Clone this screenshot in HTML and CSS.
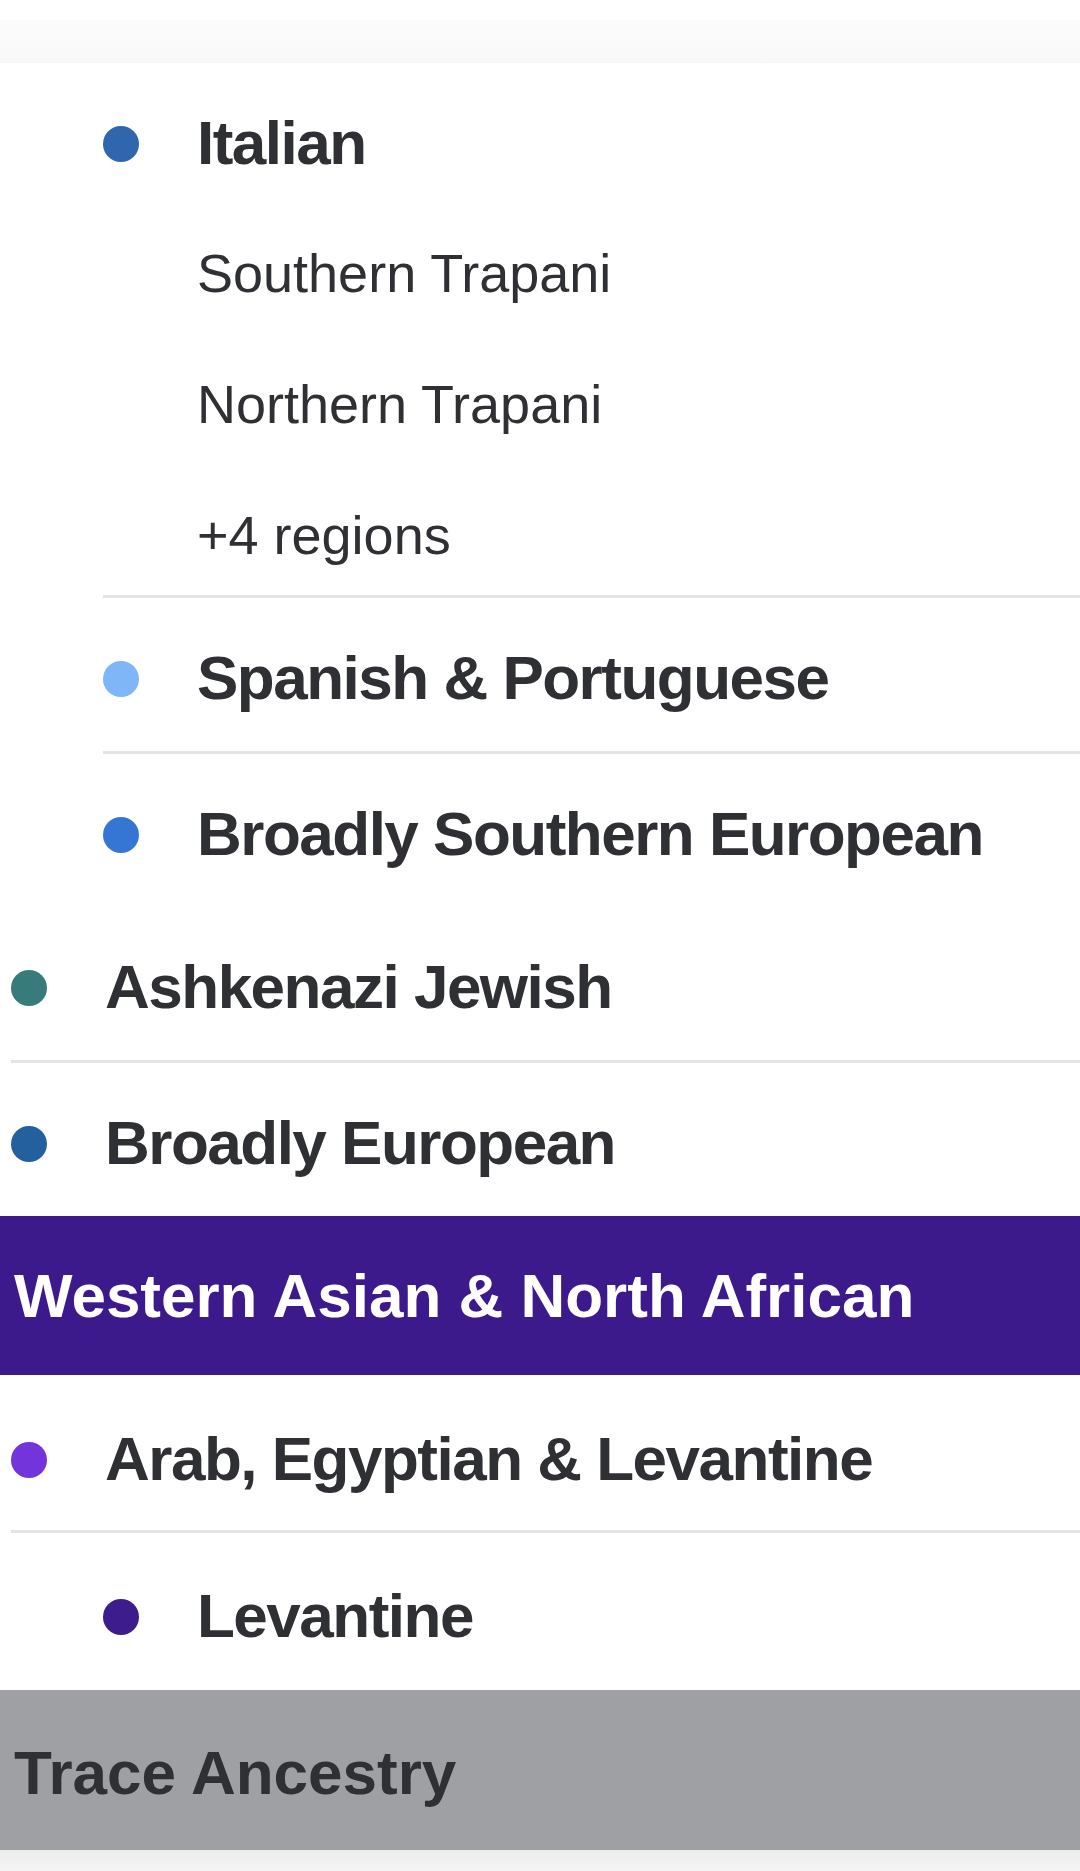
FILE: index.html
```html
<!DOCTYPE html>
<html lang="en">
<head>
  <meta charset="UTF-8">
  <title>Ancestry Composition</title>
  <link rel="stylesheet" href="styles.css">
</head>
<body>

<div class="topbar"></div>

<div class="card">
  <div class="group nested">
    <div class="row">
      <span class="dot italian"></span>
      <span class="label">Italian</span>
    </div>
    <div class="subs">
      <div class="sub">Southern Trapani</div>
      <div class="sub">Northern Trapani</div>
      <div class="sub">+4 regions</div>
    </div>
  </div>

  <div class="row nested line">
    <span class="dot iberian"></span>
    <span class="label">Spanish &amp; Portuguese</span>
  </div>

  <div class="row nested">
    <span class="dot s-euro"></span>
    <span class="label">Broadly Southern European</span>
  </div>

  <div class="row top line">
    <span class="dot ashkenazi"></span>
    <span class="label">Ashkenazi Jewish</span>
  </div>

  <div class="row top">
    <span class="dot euro"></span>
    <span class="label">Broadly European</span>
  </div>

  <div class="region wana">Western Asian &amp; North African</div>

  <div class="row top line first">
    <span class="dot arab"></span>
    <span class="label">Arab, Egyptian &amp; Levantine</span>
  </div>

  <div class="row nested last">
    <span class="dot levant"></span>
    <span class="label">Levantine</span>
  </div>

  <div class="region trace">Trace Ancestry</div>
</div>

<div class="bottombar"></div>

</body>
</html>
```

FILE: styles.css
```css
body { margin:0; padding:0; background:#fff; font-family:"Liberation Sans", Arial, sans-serif; color:#2f3033; }

.topbar { height:43px; margin-top:20px; background:linear-gradient(#fcfcfc, #f8f8f8); box-shadow:0 1px 2px rgba(0,0,0,0.04); }
.bottombar { height:23px; background:linear-gradient(#ececec, #f6f6f6); }

.card { background:#fff; }

.row { display:flex; align-items:center; height:145px; padding-top:8px; }
.row.top { margin-left:11px; }
.row.nested, .group.nested { margin-left:103px; }
.group.nested .row { margin-left:0; }
.row.first { height:141px; padding-top:14px; }
.row.last { height:147px; padding-top:10px; }
.line, .group { border-bottom:3px solid #e3e4e6; }

.dot { width:36px; height:36px; border-radius:50%; flex:none; margin-right:58px; }
.label { font-size:62px; font-weight:bold; line-height:1.2; letter-spacing:-1.5px; white-space:nowrap; }

.subs { display:flex; flex-direction:column; gap:69px; padding:26px 0 29px 94px; }
.sub { font-size:54px; line-height:62px; height:62px; white-space:nowrap; }

.region { display:flex; align-items:center; padding-left:14px; font-size:62px; font-weight:bold; white-space:nowrap; }
.wana { height:159px; background:#3c1a8c; color:#fff; }
.trace { height:160px; padding-top:4px; box-sizing:border-box; background:#9fa0a4; color:#2f3033; }

.italian { background:#2f66ad; }
.iberian { background:#7fb6f7; }
.s-euro { background:#3575d3; }
.ashkenazi { background:#377c7a; }
.euro { background:#25609e; }
.arab { background:#7434db; }
.levant { background:#3d1c8e; }
```
